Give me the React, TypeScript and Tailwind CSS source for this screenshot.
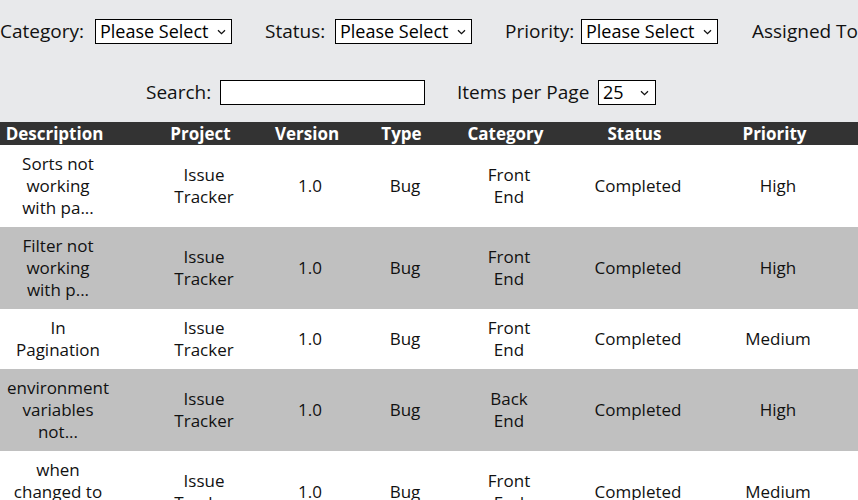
import React from "react";

const F = { fontFamily: "'Open Sans', 'Noto Sans', sans-serif" };

function Chevron() {
  return (
    <svg width="9" height="6" viewBox="0 0 9 6" className="shrink-0">
      <path d="M1 1.2 L4.5 4.6 L8 1.2" fill="none" stroke="#111" strokeWidth="1.3" />
    </svg>
  );
}

function FakeSelect({ w, text, chevPad }: { w: string; text: string; chevPad?: string }) {
  return (
    <div className={`${w} h-[25px] bg-white border border-black flex items-center justify-between pl-[4px] ${chevPad ?? "pr-[5px]"} shrink-0`}>
      <span className="text-[18px] leading-[23px] text-black">{text}</span>
      <Chevron />
    </div>
  );
}

type Row = { d: string[]; cat: string[]; pr: string; gray: boolean };

const rows: Row[] = [
  { d: ["Sorts not", "working", "with pa..."], cat: ["Front", "End"], pr: "High", gray: false },
  { d: ["Filter not", "working", "with p..."], cat: ["Front", "End"], pr: "High", gray: true },
  { d: ["In", "Pagination"], cat: ["Front", "End"], pr: "Medium", gray: false },
  { d: ["environment", "variables", "not..."], cat: ["Back", "End"], pr: "High", gray: true },
  { d: ["when", "changed to", "pag..."], cat: ["Front", "End"], pr: "Medium", gray: false },
];

const cols = [
  "w-[116px]",
  "ml-[18px] w-[140px]",
  "ml-[1px] w-[70px]",
  "ml-[25px] w-[70px]",
  "ml-[19px] w-[100px]",
  "ml-[19px] w-[120px]",
  "ml-[20px] w-[120px]",
];

function Lines({ l }: { l: string[] }) {
  return (
    <>
      {l.map((t, i) => (
        <div key={i}>{t}</div>
      ))}
    </>
  );
}

export default function App() {
  const headers = ["Description", "Project", "Version", "Type", "Category", "Status", "Priority"];
  return (
    <div className="w-[858px] h-[500px] overflow-hidden bg-[#e8e9eb] text-[#111]" style={F}>
      <div className="pt-[19px] h-[44px] flex items-center whitespace-nowrap text-[19px] leading-[25px]">
        <span className="w-[86px] shrink-0">Category:</span>
        <div className="ml-[9px]"><FakeSelect w="w-[137px]" text="Please Select" /></div>
        <span className="ml-[33px] w-[62px] shrink-0">Status:</span>
        <div className="ml-[8px]"><FakeSelect w="w-[137px]" text="Please Select" /></div>
        <span className="ml-[33px] w-[68px] shrink-0">Priority:</span>
        <div className="ml-[8px]"><FakeSelect w="w-[137px]" text="Please Select" /></div>
        <span className="ml-[34px] shrink-0">Assigned To:</span>
      </div>
      <div className="mt-[36px] h-[25px] flex items-center whitespace-nowrap text-[19px] leading-[25px] pl-[146px]">
        <span className="w-[66px] shrink-0">Search:</span>
        <div className="ml-[8px] w-[205px] h-[25px] bg-white border border-black shrink-0" />
        <span className="ml-[32px] w-[132px] shrink-0">Items per Page</span>
        <div className="ml-[9px]"><FakeSelect w="w-[58px]" text="25" chevPad="pr-[6px]" /></div>
      </div>
      <div className="mt-[17px]">
        <div className="h-[23px] bg-[#333333] flex items-center text-white font-bold text-[17px] leading-[23px]">
          {headers.map((h, i) => (
            <div key={h} className={`${cols[i]} shrink-0 text-center pr-[7px]`}>{h}</div>
          ))}
        </div>
        {rows.map((r, ri) => (
          <div
            key={ri}
            className={`flex items-center py-[8px] text-[17px] leading-[22px] ${r.gray ? "bg-[#c0c0c0]" : "bg-white"}`}
          >
            <div className={`${cols[0]} shrink-0 text-center`}><Lines l={r.d} /></div>
            <div className={`${cols[1]} shrink-0 text-center`}><Lines l={["Issue", "Tracker"]} /></div>
            <div className={`${cols[2]} shrink-0 text-center`}>1.0</div>
            <div className={`${cols[3]} shrink-0 text-center`}>Bug</div>
            <div className={`${cols[4]} shrink-0 text-center`}><Lines l={r.cat} /></div>
            <div className={`${cols[5]} shrink-0 text-center`}>Completed</div>
            <div className={`${cols[6]} shrink-0 text-center`}>{r.pr}</div>
          </div>
        ))}
      </div>
    </div>
  );
}
